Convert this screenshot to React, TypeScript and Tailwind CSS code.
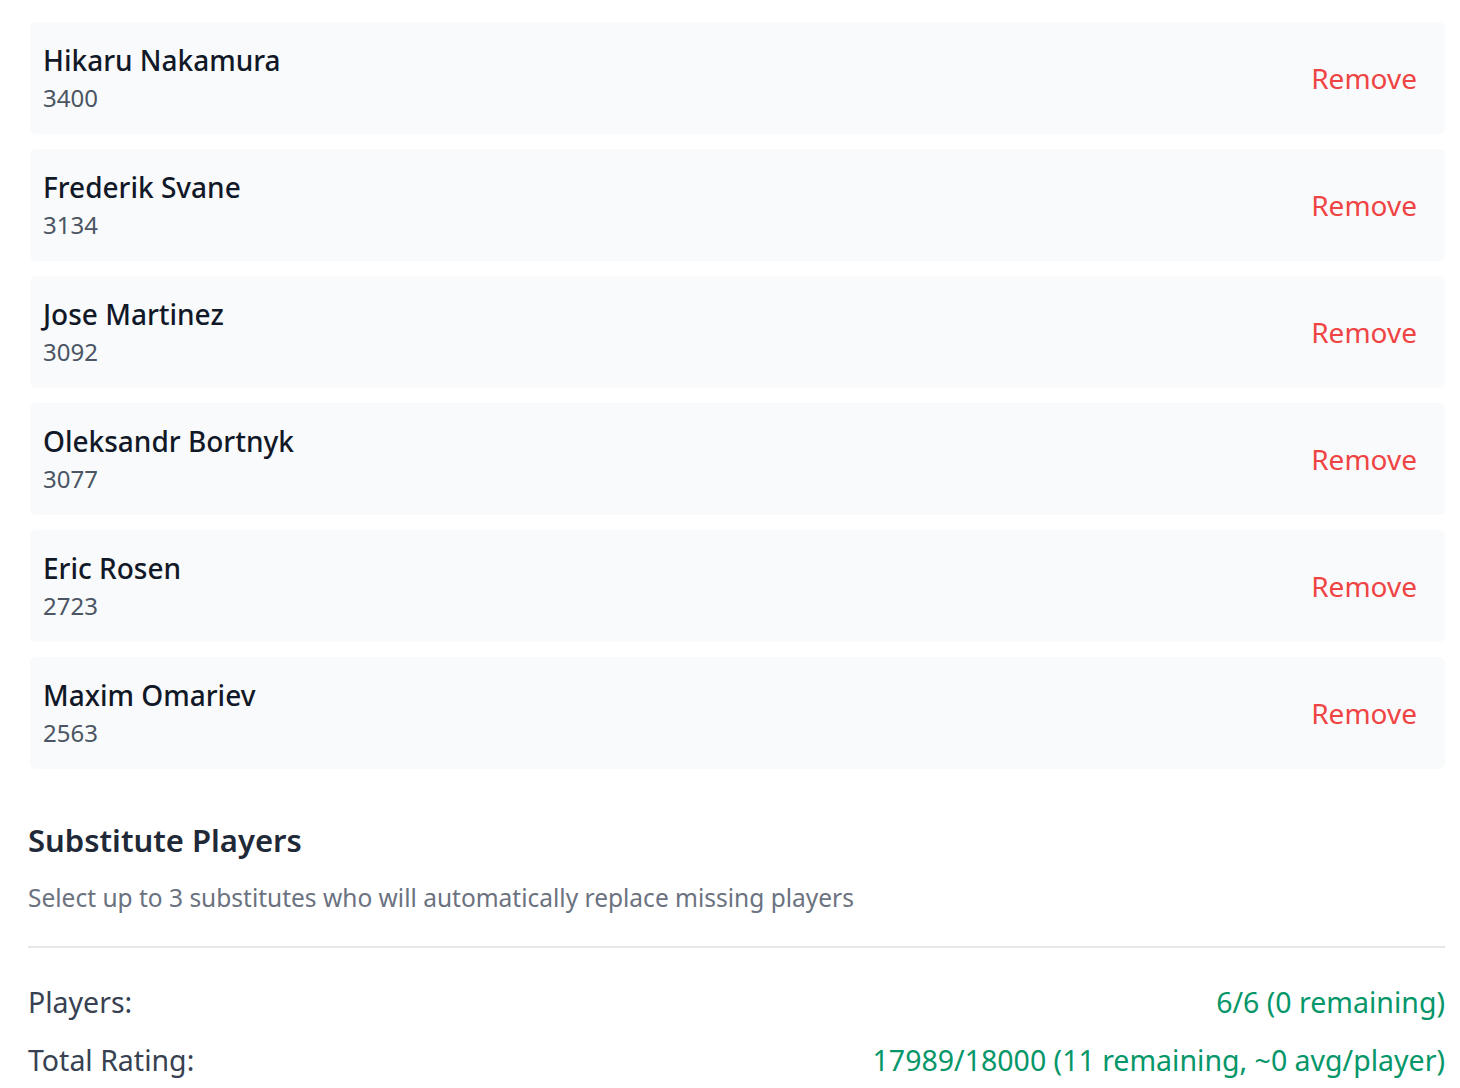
const PLAYERS = [
  { name: "Hikaru Nakamura", rating: 3400 },
  { name: "Frederik Svane", rating: 3134 },
  { name: "Jose Martinez", rating: 3092 },
  { name: "Oleksandr Bortnyk", rating: 3077 },
  { name: "Eric Rosen", rating: 2723 },
  { name: "Maxim Omariev", rating: 2563 },
];

export default function App() {
  return (
    <div className="min-h-screen bg-white pl-[28px] pr-[15px] pt-[22px] font-['Noto_Sans',sans-serif]">
      <div className="flex flex-col gap-[15px] pl-[2px]">
        {PLAYERS.map((p) => (
          <div
            key={p.name}
            className="flex items-center justify-between rounded-md bg-[#f9fafb] py-[18px] pl-[13px] pr-[14px]"
          >
            <div>
              <div className="text-[28px] leading-[40px] font-medium text-[#111827]">{p.name}</div>
              <div className="text-[24px] leading-[36px] text-[#4b5563]">{p.rating}</div>
            </div>
            <button className="px-[14px] text-[28px] text-[#ef4444]">Remove</button>
          </div>
        ))}
      </div>

      <h2 className="mt-[49px] text-[31px] leading-[44px] font-semibold text-[#1f2937]">Substitute Players</h2>
      <p className="mt-[18px] text-[24.5px] leading-[36px] text-[#6b7280]">
        Select up to 3 substitutes who will automatically replace missing players
      </p>

      <div className="mt-[30px] border-t-2 border-[#e5e7eb] pt-[34px] text-[28.5px] leading-[40px]">
        <div className="flex justify-between">
          <span className="text-[#374151]">Players:</span>
          <span className="text-[#059669]">6/6 (0 remaining)</span>
        </div>
        <div className="mt-[18px] flex justify-between">
          <span className="text-[#374151]">Total Rating:</span>
          <span className="text-[#059669]">17989/18000 (11 remaining, ~0 avg/player)</span>
        </div>
      </div>
    </div>
  );
}
